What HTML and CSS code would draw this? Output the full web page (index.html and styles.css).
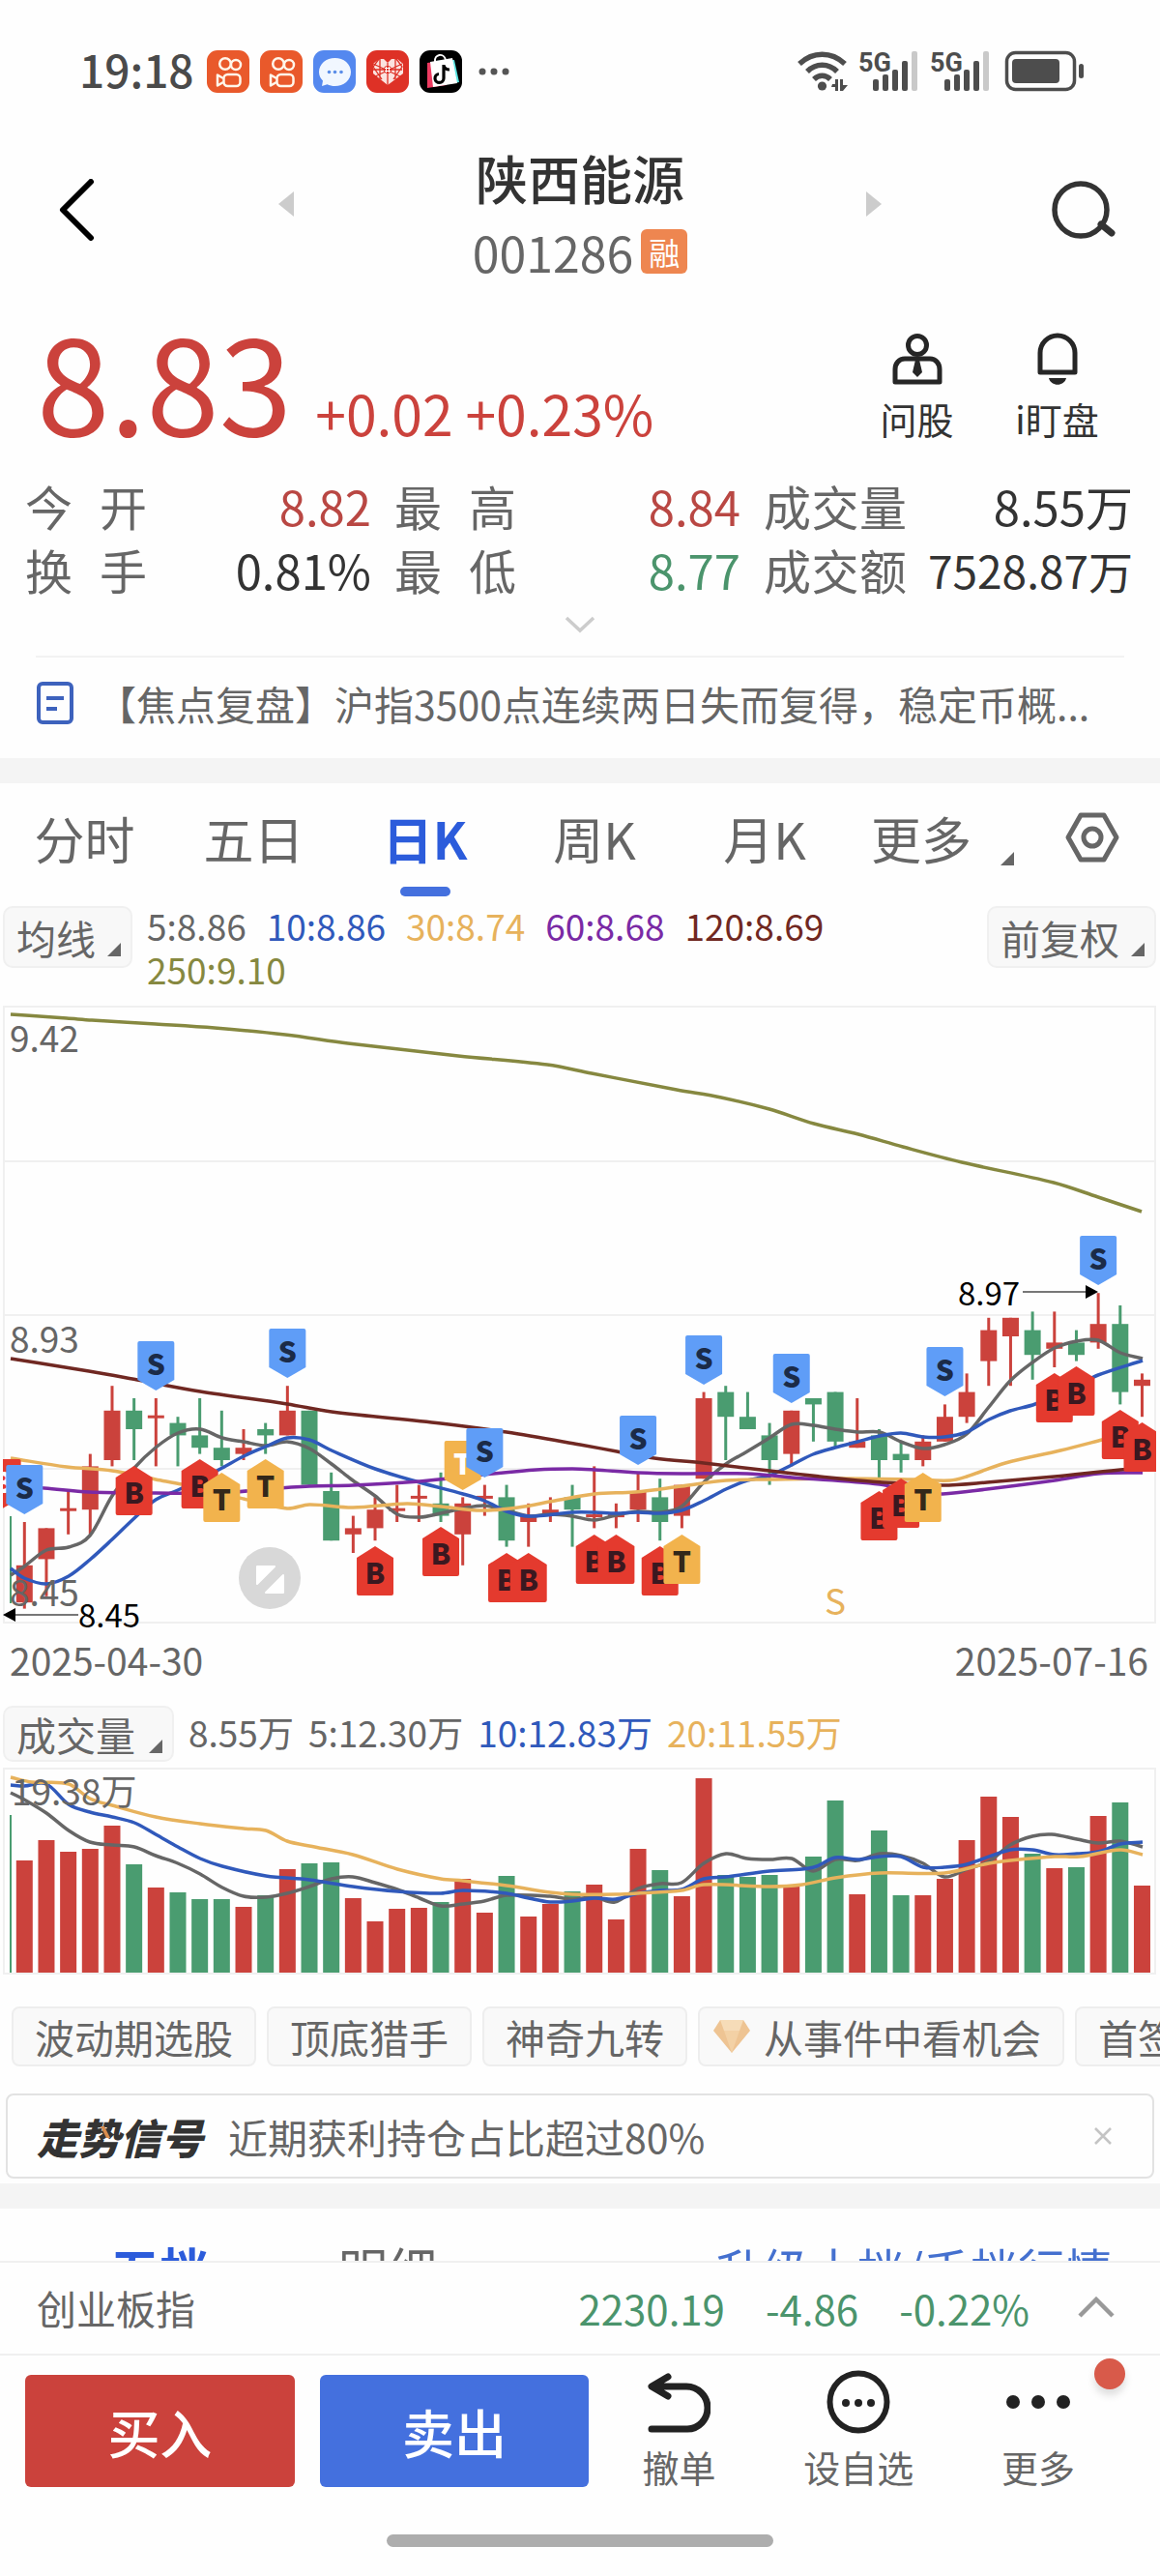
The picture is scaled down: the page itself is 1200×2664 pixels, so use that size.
FILE: index.html
```html
<!DOCTYPE html>
<html lang="zh-CN">
<head>
<meta charset="utf-8">
<meta name="viewport" content="width=device-width, initial-scale=1">
<title>陕西能源 001286</title>
<link rel="stylesheet" href="styles.css">
</head>
<body>
<div class="status">
  <span class="status-time">19:18</span>
  <div class="status-apps">
    <svg viewBox="0 0 44 44"><rect width="44" height="44" rx="11" fill="#e9592b"/><g fill="none" stroke="#fff6ea" stroke-width="2.500"><circle cx="19" cy="14" r="5.800"/><circle cx="30" cy="15" r="5"/><rect x="17.500" y="25" width="17" height="12" rx="4"/><path d="M17 29l-6-3.500v11l6-3.500" stroke-linejoin="round"/></g></svg>
    <svg viewBox="0 0 44 44"><rect width="44" height="44" rx="11" fill="#e9592b"/><g fill="none" stroke="#fff6ea" stroke-width="2.500"><circle cx="19" cy="14" r="5.800"/><circle cx="30" cy="15" r="5"/><rect x="17.500" y="25" width="17" height="12" rx="4"/><path d="M17 29l-6-3.500v11l6-3.500" stroke-linejoin="round"/></g></svg>
    <svg viewBox="0 0 44 44"><rect width="44" height="44" rx="11" fill="#5488ef"/><path d="M22.500 8C31.500 8 39 14 39 22.500S31.500 37 22.500 37c-3 0-5.500-.6-8-1.800L9 37l1-5.500c-2.500-2.500-4-5.500-4-9C6 14 13.500 8 22.500 8z" fill="#f1f7ff"/><g fill="#5a8de8"><circle cx="16.500" cy="22.500" r="1.800"/><circle cx="22.500" cy="22.500" r="1.800"/><circle cx="29" cy="22.500" r="1.800"/></g></svg>
    <svg viewBox="0 0 44 44"><rect width="44" height="44" rx="11" fill="#de3126"/><path d="M22 36L7 24V14l6-5h5l4 4 4-4h6l6 5v10z" fill="#fbe3df"/><path d="M7 14l30 14M37 14L7 28M14 9v21M30 9v21M22 13v23M7 20h30M13 9l-6 8 9 13M31 9l6 8-9 13" stroke="#de3126" stroke-width="1.300" fill="none"/><circle cx="22" cy="20" r="4" fill="#de3126"/><path d="M20.500 17v6M23.500 17v6M19 18.500h6M19 21.500h6" stroke="#fff"/></svg>
    <svg viewBox="0 0 44 44"><rect width="44" height="44" rx="11" fill="#000"/><path d="M8 13l22-3-2 26-20 3z" fill="#ee3b61"/><path d="M16 11l20-1 5 23-18 3z" fill="#5ae3e0"/><path d="M11 12l23-4 5 26-25 4z" fill="#fff"/><path d="M16 12c-1-8 9-10 11-2" fill="none" stroke="#fff" stroke-width="2"/><path d="M25 15v14a4.500 4.500 0 1 1-5-4.500M25 16c1 3 3 4 6 4" fill="none" stroke="#000" stroke-width="3.200"/></svg>
  </div>
  <svg class="status-dots" viewBox="0 0 32 8" fill="#555"><circle cx="4" cy="4" r="3.500"/><circle cx="16" cy="4" r="3.500"/><circle cx="28" cy="4" r="3.500"/></svg>
  <svg class="status-right" viewBox="0 0 300 44" fill="#4d4d4d">
    <g fill="none" stroke="#4d4d4d" stroke-width="5.500"><path d="M3 14c14-13 33-13 47 0"/><path d="M11 22c9-9 22-9 31 0"/><path d="M18 30c5-5 12-5 17 0"/></g>
    <circle cx="26.500" cy="37" r="4.600"/><path d="M37 35h3v-5h3v12h-3v-4h-4zM45 30h3v6h5l-5 6h-3z"/>
    <text x="64" y="22" class="net">5G</text><text x="138" y="22" class="net">5G</text>
    <rect x="79" y="30" width="6" height="12" rx="2"/><rect x="89" y="25" width="6" height="17" rx="2"/><rect x="99" y="20" width="6" height="22" rx="2"/><rect x="109" y="11" width="6" height="31" rx="2"/><rect x="119" y="1" width="6" height="41" rx="2" fill="#c9c9c9"/>
    <rect x="153" y="30" width="6" height="12" rx="2"/><rect x="163" y="25" width="6" height="17" rx="2"/><rect x="173" y="20" width="6" height="22" rx="2"/><rect x="183" y="11" width="6" height="31" rx="2"/><rect x="193" y="1" width="6" height="41" rx="2" fill="#c9c9c9"/>
    <rect x="217.500" y="2.500" width="70" height="38" rx="9" fill="none" stroke="#4d4d4d" stroke-width="3.500"/><rect x="223" y="9" width="49" height="25" rx="4"/><rect x="292" y="14" width="5" height="15" rx="2.500"/>
  </svg>
</div>

<header class="top">
  <button class="icon-btn" aria-label="返回"><svg class="back" viewBox="0 0 38 64"><path d="M34 3L5 32l29 29" fill="none" stroke="#000" stroke-width="6" stroke-linecap="round" stroke-linejoin="round"/></svg></button>
  <button class="icon-btn stepper" aria-label="上一只"><svg class="step" viewBox="0 0 16 26"><path d="M16 0v26L0 13z" fill="#ccc"/></svg></button>
  <div class="name">
    <h1>陕西能源</h1>
    <div class="code"><span>001286</span><span class="tag">融</span></div>
  </div>
  <button class="icon-btn stepper" aria-label="下一只"><svg class="step" viewBox="0 0 16 26"><path d="M0 0v26l16-13z" fill="#ccc"/></svg></button>
  <button class="icon-btn" aria-label="搜索"><svg class="search" viewBox="0 0 68 62" fill="none" stroke="#333" stroke-width="5.500"><circle cx="31" cy="31" r="27"/><path d="M52 46l11 9" stroke-width="7" stroke-linecap="round"/></svg></button>
</header>

<section class="quote">
  <div class="price"><strong>8.83</strong><span>+0.02 +0.23%</span></div>
  <button class="quote-tool"><svg viewBox="0 0 54 54" fill="none" stroke="#262626" stroke-width="5"><circle cx="27" cy="13" r="9.500"/><path d="M4 51V38c0-6 4-11 10-11h26c6 0 10 5 10 11v13z" stroke-linejoin="round"/><path d="M25 28h4l3 13-5 5-5-5z" fill="#262626" stroke="none"/></svg>问股</button>
  <button class="quote-tool"><svg viewBox="0 0 54 54" fill="none" stroke="#262626" stroke-width="5"><path d="M9 41V21a18 18 0 0 1 36 0v20z" stroke-linejoin="round"/><path d="M18 47h18c-2 9-16 9-18 0z" fill="#262626" stroke="none"/></svg>i盯盘</button>
</section>

<dl class="stats">
  <div><dt>今 开</dt><dd class="up">8.82</dd></div>
  <div><dt>最 高</dt><dd class="up">8.84</dd></div>
  <div><dt>成交量</dt><dd>8.55万</dd></div>
  <div><dt>换 手</dt><dd>0.81%</dd></div>
  <div><dt>最 低</dt><dd class="down">8.77</dd></div>
  <div><dt>成交额</dt><dd class="small">7528.87万</dd></div>
</dl>
<button class="expand" aria-label="展开"><svg viewBox="0 0 32 18"><path d="M2 2l14 13L30 2" fill="none" stroke="#ccc" stroke-width="3.500"/></svg></button>

<a class="news" href="#news">
  <svg viewBox="0 0 40 46" fill="none" stroke="#3d62bd" stroke-width="4"><rect x="3" y="3" width="34" height="40" rx="4"/><path d="M11 18h18M11 29h11"/></svg>
  <span>【焦点复盘】沪指3500点连续两日失而复得，稳定币概...</span>
</a>
<div class="band"></div>

<nav class="tabs">
  <button>分时</button>
  <button>五日</button>
  <button class="on">日K</button>
  <button>周K</button>
  <button>月K</button>
  <button class="more">更多<i class="corner"></i></button>
  <button aria-label="设置"><svg viewBox="0 0 56 52" fill="none" stroke="#666" stroke-width="5"><path d="M16 3h24l13 23-13 23H16L3 26z" stroke-linejoin="round"/><circle cx="28" cy="26" r="9"/></svg></button>
</nav>

<div class="legend-row">
  <button class="pick">均线<i class="corner"></i></button>
  <div class="legend">
    <span>5:8.86</span><span class="c-blue">10:8.86</span><span class="c-gold">30:8.74</span><span class="c-purple">60:8.68</span><span class="c-wine">120:8.69</span><span class="c-olive">250:9.10</span>
  </div>
  <button class="pick">前复权<i class="corner"></i></button>
</div>
<svg id="kline" class="chart" viewBox="0 0 1200 640"></svg>
<div class="dates"><span>2025-04-30</span><span>2025-07-16</span></div>

<div class="legend-row volume">
  <button class="pick">成交量<i class="corner"></i></button>
  <div class="legend tight">
    <span>8.55万</span><span>5:12.30万</span><span class="c-blue">10:12.83万</span><span class="c-gold">20:11.55万</span>
  </div>
</div>
<svg id="volume" class="chart" viewBox="0 0 1200 216"></svg>

<div class="chips">
  <button>波动期选股</button>
  <button>顶底猎手</button>
  <button>神奇九转</button>
  <button class="gem"><svg viewBox="0 0 38 34"><path d="M7 0h24l7 11-19 23L0 11z" fill="#eec493"/><path d="M7 0h24l-4 11H11z" fill="#f6dcb8"/><path d="M11 11h16l-8 23z" fill="#f3d1a5"/></svg>从事件中看机会</button>
  <button>首签必看</button>
</div>

<div class="signal">
  <b>走势信号<i></i></b>
  <span>近期获利持仓占比超过80%</span>
  <button aria-label="关闭"><svg viewBox="0 0 18 18"><path d="M1 1l16 16M17 1L1 17" stroke="#c4c4c4" stroke-width="2.500"/></svg></button>
</div>
<div class="band"></div>

<div class="depth">
  <button class="on">五档</button>
  <button>明细</button>
  <a href="#level2">升级十档/千档行情</a>
</div>

<footer>
  <div class="index">
    <span class="index-name">创业板指</span>
    <span>2230.19</span><span>-4.86</span><span>-0.22%</span>
    <button aria-label="展开指数"><svg viewBox="0 0 38 22"><path d="M2 20L19 3l17 17" fill="none" stroke="#999" stroke-width="4.500"/></svg></button>
  </div>
  <div class="actions">
    <button class="trade buy">买入</button>
    <button class="trade sell">卖出</button>
    <button class="tool"><svg viewBox="0 0 66 66" fill="none" stroke="#222" stroke-width="7" stroke-linecap="round" stroke-linejoin="round"><path d="M22 7L5 17l17 10M7 17h34c12 0 22 10 22 22s-9 22-21 22H5"/></svg>撤单</button>
    <button class="tool"><svg viewBox="0 0 66 66"><circle cx="33" cy="33" r="29.500" fill="none" stroke="#222" stroke-width="6"/><g fill="#222"><circle cx="20" cy="34" r="4"/><circle cx="33" cy="34" r="4"/><circle cx="46" cy="34" r="4"/></g></svg>设自选</button>
    <button class="tool"><svg viewBox="0 0 66 66" fill="#222"><circle cx="7" cy="33" r="7"/><circle cx="33" cy="33" r="7"/><circle cx="59" cy="33" r="7"/></svg>更多<i class="badge"></i></button>
  </div>
  <div class="home"></div>
</footer>
<script src="chart.js"></script>
</body>
</html>
```
FILE: styles.css
```css
* { box-sizing: border-box; }
body {
  margin: 0;
  background: #fefefe;
  color: #666;
  font-family: "Noto Sans CJK SC", "Noto Sans", sans-serif;
  font-size: 41px;
  overflow-x: hidden;
}
button {
  border: 0;
  padding: 0;
  background: none;
  color: inherit;
  font: inherit;
  white-space: nowrap;
}
a { color: inherit; text-decoration: none; }
svg { display: block; flex: none; }

.c-blue { color: #3059bb; }
.c-gold { color: #e7b25c; }
.c-purple { color: #7a2aa5; }
.c-wine { color: #702822; }
.c-olive { color: #868840; }

/* status bar */
.status { display: flex; align-items: center; height: 148px; padding: 0 76px 0 82px; }
.status-time { width: 132px; padding-bottom: 6px; color: #4a4a4a; font-size: 46px; font-weight: 500; line-height: 60px; }
.status-apps { display: flex; gap: 11px; }
.status-apps svg { width: 44px; height: 44px; }
.status-dots { width: 32px; height: 8px; margin-left: 17px; }
.status-right { width: 300px; height: 44px; margin-left: auto; overflow: visible; }
.net { font: bold 27px "Roboto", sans-serif; }

/* header */
.top { display: grid; grid-template-columns: 158px 276px 1fr 276px 158px; align-items: center; }
.icon-btn { display: flex; justify-content: center; padding-bottom: 14px; }
.stepper { padding-bottom: 26px; }
.back { width: 38px; height: 64px; }
.step { width: 16px; height: 26px; }
.search { width: 68px; height: 62px; }
.name { text-align: center; }
h1 { margin: 0; color: #333; font-size: 54px; font-weight: 500; line-height: 72px; }
.code { display: flex; align-items: center; justify-content: center; gap: 8px; font-size: 50px; line-height: 80px; }
.tag { padding: 0 8px; border-radius: 6px; background: #ee8650; color: #fff; font-size: 32px; line-height: 46px; }

/* price */
.quote { display: flex; align-items: flex-start; padding: 22px 34px 0 38px; }
.price { display: flex; align-items: baseline; gap: 24px; flex: 1; color: #cb423c; }
.price strong { font-size: 136px; font-weight: 400; line-height: 140px; }
.price span { font-size: 57px; line-height: 60px; }
.quote-tool { width: 145px; padding-top: 22px; color: #333; font-size: 38px; line-height: 70px; }
.quote-tool svg { width: 54px; height: 54px; margin: 0 auto; }

.stats {
  display: grid;
  grid-template-columns: 358fr 358fr 382fr;
  column-gap: 24px;
  margin: 22px 0 0;
  padding: 0 28px 0 26px;
  font-size: 49px;
  line-height: 66px;
}
.stats div { display: flex; justify-content: space-between; white-space: nowrap; }
.stats dt { width: 126px; text-align: justify; text-align-last: justify; }
.stats div:nth-child(3n) dt { width: 148px; }
.stats dd { margin: 0; color: #333; }
.stats .up { color: #b94743; }
.stats .down { color: #4b946c; }
.stats .small { font-size: 46px; }

.expand { display: flex; align-items: center; justify-content: center; width: 100%; height: 48px; margin-bottom: 8px; }
.expand svg { width: 32px; height: 18px; }

.news { display: flex; align-items: center; gap: 23px; height: 106px; margin: 0 37px; padding-bottom: 10px; border-top: 2px solid #f2f2f2; line-height: 60px; }
.news svg { width: 40px; height: 46px; }
.news span { white-space: nowrap; overflow: hidden; }
.band { height: 26px; background: #f4f4f4; }

/* period tabs */
.tabs { display: grid; grid-template-columns: 175fr 175fr 179fr 172fr 180fr 188fr 122fr 9fr; height: 112px; font-size: 52px; }
.tabs button { position: relative; }
.tabs .on { color: #2c5cdb; font-weight: 700; }
.tabs .on::after {
  content: "";
  position: absolute;
  left: calc(50% - 26px);
  bottom: -5px;
  width: 52px;
  height: 10px;
  border-radius: 5px;
  background: #4470de;
}
.tabs .more { display: flex; align-items: center; justify-content: center; gap: 30px; }
.tabs svg { width: 56px; height: 52px; margin: 0 auto; }
.corner { width: 14px; height: 14px; background: #666; clip-path: polygon(100% 0, 100% 100%, 0 100%); }
.tabs .corner { margin-top: 44px; }

/* indicator rows */
.legend-row { display: flex; align-items: flex-start; gap: 15px; padding: 13px 4px 15px 3px; }
.legend { display: flex; flex-wrap: wrap; flex: 1; column-gap: 21px; font-size: 37px; line-height: 45px; }
.legend.tight { column-gap: 15px; line-height: 54px; }
.pick {
  display: flex;
  align-items: center;
  gap: 12px;
  height: 64px;
  margin-top: 2px;
  padding: 0 10px 0 12px;
  border: 2px solid #f0f0f0;
  border-radius: 10px;
  background: #f8f8f8;
}
.pick .corner { margin-top: 26px; }
.volume { padding: 12px 4px 6px 3px; }
.volume .pick { height: 58px; margin: 0; gap: 14px; }
.chart { width: 100%; height: auto; overflow: visible; }
.chart text { font-size: 37px; fill: #666; }
.chart .extreme { font-size: 33px; fill: #000; }
.chart .mark { font-size: 30px; font-weight: 900; text-anchor: middle; }
.dates { display: flex; justify-content: space-between; padding: 0 12px 0 10px; font-size: 39px; line-height: 72px; }

/* strategy chips */
.chips { display: flex; gap: 11px; margin-top: 31px; padding-left: 12px; overflow: hidden; }
.chips button { display: flex; align-items: center; flex: none; gap: 14px; height: 62px; padding: 0 22px; border: 2px solid #eee; border-radius: 8px; background: #f9f9f9; }
.chips .gem { padding-left: 14px; }
.gem svg { width: 38px; height: 34px; }

.signal { display: flex; align-items: center; gap: 26px; height: 88px; margin: 28px 6px 5px; padding: 0 42px 0 30px; border: 2px solid #e2e2e2; border-radius: 8px; }
.signal b { position: relative; color: #333; font-size: 43px; font-style: italic; font-weight: 900; line-height: 60px; }
.signal b i { position: absolute; left: 66px; top: 20px; width: 10px; height: 12px; background: #d98c4c; clip-path: polygon(0 0, 40% 0, 100% 100%, 60% 100%); }
.signal span { flex: 1; }
.signal svg { width: 18px; height: 18px; }

.depth { display: flex; align-items: flex-start; height: 54px; padding: 32px 49px 0 114px; overflow: hidden; font-size: 51px; line-height: 60px; }
.depth button { margin-right: 134px; }
.depth .on { color: #2c5cdb; font-weight: 700; }
.depth a { margin-left: auto; color: #4470cf; font-size: 49px; }

/* bottom bar */
footer { background: #fefefe; }
.index { display: flex; align-items: center; gap: 42px; height: 98px; padding: 0 47px 2px 38px; border-top: 2px solid #f0f0f0; border-bottom: 2px solid #f0f0f0; color: #4b946c; font-size: 42px; }
.index-name { flex: 1; color: #666; font-size: 41px; }
.index button { margin-left: 8px; }
.index svg { width: 38px; height: 22px; }

.actions { display: grid; grid-template-columns: 279fr 26fr 279fr 186fr 186fr 186fr; padding: 0 33px 0 26px; }
.trade { height: 116px; margin-top: 20px; border-radius: 6px; color: #fff; font-size: 54px; font-weight: 500; }
.buy { background: #cb423c; }
.sell { grid-column: 3; background: #4470de; }
.tool { position: relative; padding-top: 15px; font-size: 38px; line-height: 48px; }
.tool svg { width: 66px; height: 66px; margin: 0 auto 10px; }
.badge { position: absolute; right: 3px; top: 3px; width: 32px; height: 32px; border-radius: 50%; background: #d85a4a; box-shadow: 0 6px 8px #0002; }
.home { width: 400px; height: 13px; margin: 46px auto 30px; border-radius: 7px; background: #adadad; }
```
FILE: chart.js
```js
const RED = '#cb423c', GREEN = '#4a9c70', GRID = '#f0f0f0';
const STEP = 22.67, FIRST = 25.3, BAR = 17;
const LINE = { ma5: '#666', ma10: '#3059bb', ma30: '#e7b25c', ma60: '#7a2aa5', ma120: '#702822', ma250: '#868840' };

const xAt = i => FIRST + STEP * i;
const rect = (x, y, w, h, fill) => `<rect x="${x}" y="${y}" width="${w}" height="${h}" fill="${fill}"/>`;
const rule = (x1, y1, x2, y2) => `<path d="M${x1} ${y1}L${x2} ${y2}" stroke="${GRID}" stroke-width="2"/>`;

// Smooth curve through a list of "x,y" points.
function curve(points, color) {
  const p = points.trim().split(/\s+/).map(s => s.split(',').map(Number));
  let d = `M${p[0]}`;
  for (let i = 0; i < p.length - 1; i++) {
    const a = p[i - 1] || p[i], b = p[i], c = p[i + 1], e = p[i + 2] || c;
    const w = c[0] - b[0];
    const m1 = (c[1] - a[1]) / (c[0] - a[0]), m2 = (e[1] - b[1]) / (e[0] - b[0]);
    d += `C${b[0] + w / 3} ${b[1] + m1 * w / 3} ${c[0] - w / 3} ${c[1] - m2 * w / 3} ${c}`;
  }
  return `<path d="${d}" fill="none" stroke="${color}" stroke-width="3.5"/>`;
}

// Day candles: colour, high, low, body top, body bottom, in cents above 8.45.
const candles = `R15,1,8,2 R14,3,14,9 R20,13,17,17 R26,13,24,17 R37,24,33,25 G35,25,33,30 R35,24,32,32
G32,24,31,29 G35,26,29,27 G33,24,27,25 R30,25,27,26 G31,26,30,29 R37,29,33,29 G33,21,33,21 G23,12,20,12
R16,10,14,13 R19,12,17,14 R21,15,17,17 R21,15,19,19 G23,15,18,16 R19,8,18,13 R21,16,19,19 G21,11,19,12
R18,11,16,15 R19,15,17,16 G21,11,19,17 R24,14,16,16 R18,14,16,16 R23,15,20,17 G22,12,19,15 R21,14,21,16
R36,22,35,22 G37,25,36,32 G36,30,32,30 G31,21,29,25 R33,24,33,26 G35,28,35,34 G36,27,36,28 R35,27,28,27
G30,21,29,25 G28,23,26,25 R29,24,28,25 R34,28,32,28 R39,31,36,32 R48,37,46,41 R48,37,48,45 G49,38,46,42
R49,40,44,43 G46,41,44,42 R52,43,47,44 G50,34,47,36 R39,32,38,37`.split(/\s+/);

const yAt = cents => 630 - cents * 6.4;
let k = [1, 161, 320, 479, 638].map(y => rule(3, y, 1196, y)).join('') + rule(4, 1, 4, 638) + rule(1195, 1, 1195, 638);
k += `<text x="10" y="48">9.42</text><text x="10" y="359">8.93</text>`;
k += rect(10, 528, 2, 90, GREEN);
candles.forEach((s, i) => {
  const fill = s[0] === 'R' ? RED : GREEN;
  const [hi, lo, top, bottom] = s.slice(1).split(',').map(n => yAt(+n));
  const x = xAt(i), flat = top === bottom;
  k += rect(x - 1.5, hi, 3, lo - hi, fill) + rect(x - BAR / 2, flat ? top - 1.5 : top, BAR, flat ? 3 : bottom - top, fill);
});
k += curve('11,589 25,580 48,563 71,560 93,548 116,507 139,478 161,457 184,442 207,438 230,447 252,451 275,455 297,451 320,458 343,474 365,491 388,507 411,526 434,529 456,525 479,520 501,517 524,522 547,528 569,526 592,528 615,532 637,527 660,523 683,524 705,518 728,493 751,474 773,461 796,447 819,433 841,434 864,438 887,441 910,441 932,451 955,458 977,454 1000,443 1023,415 1045,388 1068,369 1091,354 1114,347 1136,346 1159,359 1182,365', LINE.ma5);
k += curve('11,582 25,592 48,598 71,590 93,573 116,552 139,530 161,511 184,501 207,490 230,478 252,466 275,456 297,447 320,449 343,460 388,479 434,493 479,505 501,512 524,523 547,528 592,524 615,524 637,525 660,524 683,525 705,522 728,512 751,500 773,491 796,486 819,475 841,464 864,457 887,451 910,445 932,442 955,446 977,446 1000,441 1023,428 1045,419 1071,412 1114,393 1136,382 1182,367', LINE.ma10);
k += curve('11,468 69,477 116,481 161,490 188,495 230,505 252,510 297,520 320,516 365,519 421,515 456,518 498,522 536,519 574,512 615,505 657,503 705,497 751,491 796,490 868,489 944,490 983,491 1000,487 1040,473 1097,460 1140,449 1182,438', LINE.ma30);
k += curve('11,497 46,499 92,503 161,504 230,504 275,500 320,497 365,496 434,492 501,485 555,480 592,479 615,480 660,483 705,484 773,484 819,488 910,495 944,503 975,505 1021,500 1091,491 1136,484 1182,483', LINE.ma60);
k += curve('11,365 92,378 142,387 207,399 297,412 343,420 456,432 524,441 600,454 638,461 677,468 728,473 796,481 887,491 932,494 975,496 1021,493 1091,487 1159,480 1182,479', LINE.ma120);
k += curve('11,9 69,13 95,15 161,19 222,23 295,30 360,39 474,52 566,61 612,70 700,87 746,95 796,107 842,122 888,133 934,146 995,162 1090,183 1136,198 1181,213', LINE.ma250);
k += `<text x="10" y="621">8.45</text>`;

// Trade marks: kind, slot and top edge.
const kinds = {
  S: ['#5f9df7', '#1b2b48', 'down'], B: ['#e43a2e', '#3a1820', 'up'], T: ['#f2b34d', '#33281a', 'up'],
  b: ['#e43a2e', '#fff', 'down'], t: ['#f2b34d', '#fff', 'down']
};
const marks = `b-1:469 S0:475 S6:347 S12:334 B5:476 B8:469 T9:483 T11:469 B16:559 B19:539 t20:450 S21:437 B22:566 B23:566
B26:547 B27:547 S28:424 B29:559 T30:547 S31:341 S35:360 B39:502 B40:489 T41:483 S42:353 S49:238 B47:380 B48:373 B50:418 B51:431`;
k += `<clipPath id="plot"><path d="M3 0H1196V640H3z"/></clipPath><g clip-path="url(#plot)">`;
marks.split(/\s+/).forEach(s => {
  const [, id, slot, top] = s.match(/(\w)(-?\d+):(\d+)/);
  const [fill, ink, dir] = kinds[id];
  const shape = dir === 'up' ? 'M0 0L19 12V49Q19 51 17 51H-17Q-19 51-19 49V12z' : 'M-17 0H17Q19 0 19 2V40L0 51L-19 40V2Q-19 0-17 0z';
  k += `<g transform="translate(${xAt(+slot)} ${top})"><path d="${shape}" fill="${fill}"/><text class="mark" y="${dir === 'up' ? 39 : 35}" style="fill:${ink}">${id.toUpperCase()}</text></g>`;
});
k += '</g>';
k += `<path d="M12 630H81M1058 296H1125" stroke="#777" stroke-width="2"/><path d="M3 630l13-7v14zM1136 296l-13-7v14z"/>`;
k += `<text class="extreme" x="81" y="643">8.45</text><text class="extreme" x="991" y="310">8.97</text>`;
k += `<circle cx="279" cy="592" r="32" fill="#d8d8d8"/><path d="M266 580h18l-18 18zM293 589v18h-18z" fill="#fff" stroke="#fff" stroke-width="2" stroke-linejoin="round"/>`;
k += `<text x="853" y="630" style="fill:#e7b25c">S</text>`;
document.getElementById('kline').innerHTML = k;

// Volume bars: colour and height.
const volumes = `R116 R137 R125 R128 R152 G112 R88 G83 G76 G76 R68 G80 R107 G113 G114 R77 R53 R66 R67 G73 R97 R62 G100
R58 R71 G84 R91 R55 R128 G106 R79 R201 G101 G99 G101 R89 G120 G178 R81 G147 G80 R80 R97 R137 R182 R161 G123 R108 G109 R162 G176 R90`.split(/\s+/);
let v = rule(3, 1, 1196, 1) + rule(3, 213, 1196, 213) + rule(4, 1, 4, 213) + rule(1195, 1, 1195, 213);
v += rect(10, 49, 2, 163, GREEN);
volumes.forEach((s, i) => {
  const h = +s.slice(1);
  v += rect(xAt(i) - BAR / 2, 212 - h, BAR, h, s[0] === 'R' ? RED : GREEN);
});
v += curve('11,26 25,33 48,47 71,65 93,77 116,80 139,82 161,91 184,99 207,110 230,124 252,133 275,134 297,130 320,123 343,115 365,113 388,119 411,126 434,135 456,143 479,141 501,138 524,132 569,133 592,136 615,134 636,139 660,125 683,120 705,119 728,99 751,89 773,94 796,95 819,94 841,107 864,95 887,96 910,89 932,91 955,99 977,113 1000,105 1023,97 1045,80 1068,71 1088,69 1114,74 1136,78 1159,76 1182,82', LINE.ma5);
v += curve('11,18 25,19 48,17 71,38 93,46 116,51 139,57 161,69 184,82 207,94 230,102 275,112 320,116 365,123 411,128 456,130 479,127 524,130 547,135 569,139 592,138 615,135 637,136 660,130 683,127 705,126 728,115 751,113 796,107 830,105 845,102 864,93 887,95 910,92 932,92 955,103 977,103 1000,100 1045,85 1068,85 1091,90 1114,89 1136,87 1159,79 1182,77', LINE.ma10);
v += curve('11,10 33,15 71,17 93,32 116,39 161,51 207,58 252,63 275,65 297,76 320,81 365,90 411,105 456,115 479,117 524,122 569,129 592,131 637,131 660,130 705,127 728,121 796,123 830,121 864,114 910,109 977,109 1023,99 1045,96 1091,92 1117,92 1159,85 1182,90', LINE.ma30);
v += `<text x="12" y="39">19.38万</text>`;
document.getElementById('volume').innerHTML = v;
```
